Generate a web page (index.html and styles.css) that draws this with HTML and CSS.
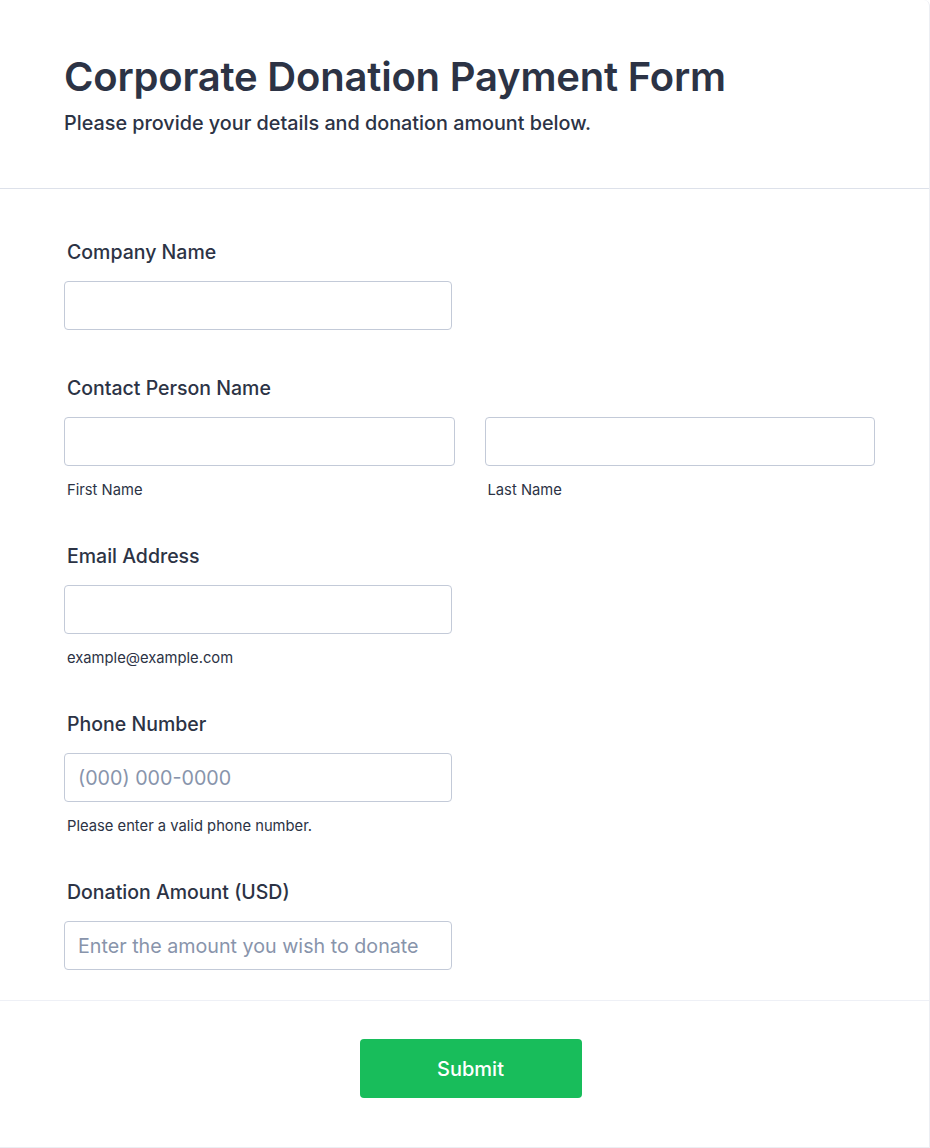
FILE: index.html
```html
<!DOCTYPE html>
<html lang="en">
<head>
<meta charset="utf-8">
<title>Corporate Donation Payment Form</title>
<link rel="stylesheet" href="styles.css">
</head>
<body>
<div class="card">
  <header class="head">
    <h1 class="title">Corporate Donation Payment Form</h1>
    <p class="subtitle">Please provide your details and donation amount below.</p>
  </header>
  <form class="form">
    <div class="field">
      <label class="label">Company Name</label>
      <input class="input" type="text">
    </div>
    <div class="field">
      <label class="label">Contact Person Name</label>
      <div class="pair">
        <div class="sub">
          <input class="input full" type="text">
          <span class="hint">First Name</span>
        </div>
        <div class="sub">
          <input class="input full" type="text">
          <span class="hint">Last Name</span>
        </div>
      </div>
    </div>
    <div class="field">
      <label class="label">Email Address</label>
      <input class="input" type="email">
      <span class="hint">example@example.com</span>
    </div>
    <div class="field">
      <label class="label">Phone Number</label>
      <input class="input" type="tel" placeholder="(000) 000-0000">
      <span class="hint">Please enter a valid phone number.</span>
    </div>
    <div class="field">
      <label class="label">Donation Amount (USD)</label>
      <input class="input" type="text" placeholder="Enter the amount you wish to donate">
    </div>
  </form>
  <footer class="foot">
    <button class="submit" type="button">Submit</button>
  </footer>
</div>
</body>
</html>
```
FILE: styles.css
```css
* { box-sizing: border-box; }
html, body { margin: 0; padding: 0; background: #fff; }
body {
  font-family: Inter, "Noto Sans", "Liberation Sans", sans-serif;
  color: #2c3345;
}
.card {
  width: 930px;
  height: 1148px;
  border-right: 1px solid #eceef3;
  border-bottom: 1px solid #eceef3;
  border-top-right-radius: 6px;
  display: flex;
  flex-direction: column;
}
.head {
  padding: 53px 0 53px 64px;
  border-bottom: 1px solid #dde1ea;
}
.title {
  margin: 0;
  font-size: 40px;
  line-height: 48px;
  font-weight: 600;
  letter-spacing: -0.2px;
}
.subtitle {
  margin: 10px 0 0;
  font-size: 19.8px;
  line-height: 24px;
  font-weight: 500;
}
.form {
  padding: 51px 0 30px 64px;
  display: flex;
  flex-direction: column;
  gap: 46px;
}
.field {
  display: flex;
  flex-direction: column;
  align-items: flex-start;
}
.label {
  font-size: 19.5px;
  line-height: 24px;
  font-weight: 500;
  padding-left: 3px;
  margin-bottom: 17px;
}
.input {
  width: 388px;
  height: 49px;
  border: 1px solid #c3cad8;
  border-radius: 4px;
  background: #fff;
  padding: 0 13px;
  font-family: inherit;
  font-size: 19.7px;
  color: #2c3345;
  outline: none;
}
.input::placeholder { color: #8894ab; }
.input.full { width: 100%; }
.pair {
  display: flex;
  gap: 30px;
  width: 811px;
}
.sub {
  flex: 1;
  display: flex;
  flex-direction: column;
}
.hint {
  font-size: 14.75px;
  line-height: 15px;
  margin-top: 17px;
  padding-left: 3px;
}
.foot {
  border-top: 1px solid #eef0f6;
  padding: 38px 0 0 12px;
  display: flex;
  justify-content: center;
}
.submit {
  width: 222px;
  height: 59px;
  border: none;
  border-radius: 4px;
  background: #18bd5b;
  color: #fff;
  font-family: inherit;
  font-size: 20px;
  font-weight: 500;
}
```
